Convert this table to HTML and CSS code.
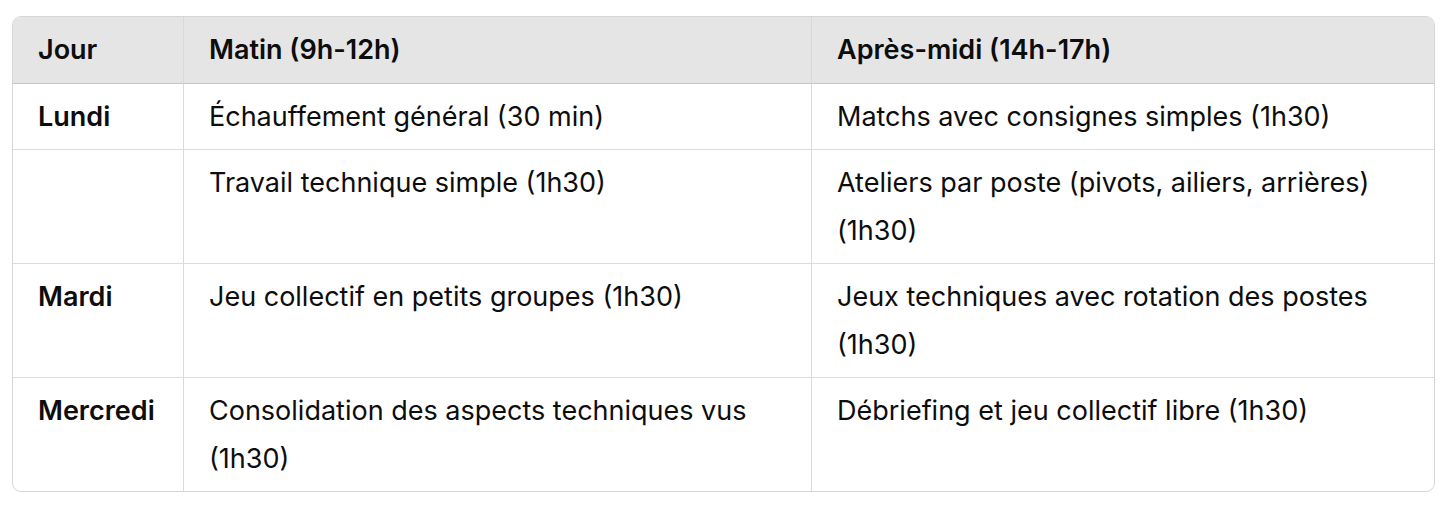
FILE: index.html
```html
<!DOCTYPE html>
<html lang="fr">
<head>
<meta charset="utf-8">
<link rel="stylesheet" href="styles.css">
</head>
<body>
<div class="wrap">
<table class="plan">
  <colgroup>
    <col class="c1"><col class="c2"><col class="c3">
  </colgroup>
  <thead>
    <tr><th>Jour</th><th>Matin (9h-12h)</th><th>Après-midi (14h-17h)</th></tr>
  </thead>
  <tbody>
    <tr><td class="day">Lundi</td><td>Échauffement général (30 min)</td><td>Matchs avec consignes simples (1h30)</td></tr>
    <tr><td class="day"></td><td>Travail technique simple (1h30)</td><td>Ateliers par poste (pivots, ailiers, arrières) (1h30)</td></tr>
    <tr><td class="day">Mardi</td><td>Jeu collectif en petits groupes (1h30)</td><td>Jeux techniques avec rotation des postes (1h30)</td></tr>
    <tr><td class="day">Mercredi</td><td>Consolidation des aspects techniques vus (1h30)</td><td>Débriefing et jeu collectif libre (1h30)</td></tr>
  </tbody>
</table>
</div>
</body>
</html>
```
FILE: styles.css
```css
html, body { margin: 0; padding: 0; background: #fff; }
body {
  font-family: Inter, "Noto Sans", "Liberation Sans", sans-serif;
  color: #0d0d0d;
}
.wrap { padding: 16px 15px 0 12px; }
.plan {
  width: 1423px;
  border-collapse: separate;
  border-spacing: 0;
  border: 1px solid #d6d6d6;
  border-radius: 9px;
  overflow: hidden;
  table-layout: fixed;
  font-size: 27px;
  line-height: 47.5px;
}
.c1 { width: 170px; }
.c2 { width: 628px; }
.c3 { width: auto; }
th, td {
  text-align: left;
  vertical-align: top;
  padding: 9px 24px 9px 25px;
}
th {
  background: #e5e5e5;
  font-weight: 600;
  border-bottom: 1px solid #c6c6c6;
}
td { border-top: 1px solid #dcdcdc; }
tbody tr:first-child td { border-top: none; }
th + th, td + td { border-left: 1px solid #d9d9d9; }
.day { font-weight: 600; }
```
